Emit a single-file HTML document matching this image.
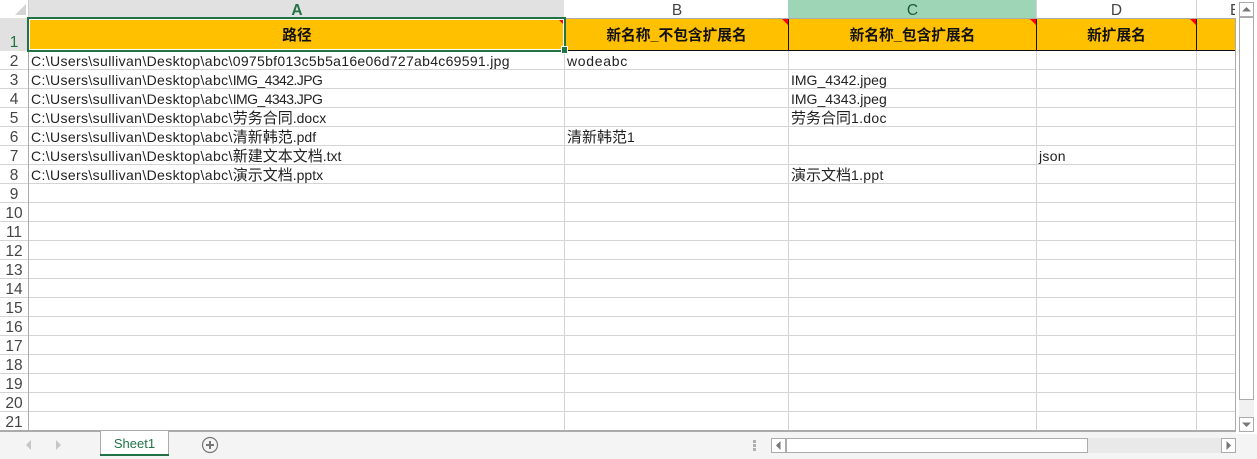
<!DOCTYPE html>
<html><head><meta charset="utf-8">
<style>
html,body{margin:0;padding:0;width:1257px;height:459px;overflow:hidden;background:#fff}
body{position:relative;font-family:"Liberation Sans","Noto Sans CJK SC",sans-serif;color:#222}
.a{position:absolute}
.hl{position:absolute;left:0;width:1235px;height:1px;background:#d4d4d4}
.vl{position:absolute;top:51px;height:379px;width:1px;background:#d4d4d4}
.rn{position:absolute;left:0;width:28px;text-align:center;font-size:15.500px;line-height:19px;color:#444}
.t{position:absolute;font-size:14px;line-height:19px;white-space:nowrap;color:#222}
.c{font-size:15px}
.p{letter-spacing:.37px}
.ch{position:absolute;top:0;height:18px;line-height:21px;text-align:center;font-size:15.500px;color:#444;overflow:hidden}
.h{position:absolute;top:18px;height:33px;line-height:36px;text-align:center;font-size:14.700px;font-weight:bold;color:#111}
.tri{position:absolute;top:19px;width:0;height:0;border-top:6px solid #f00;border-left:6px solid transparent}
</style></head><body>
<!-- column header band -->
<svg class="a" style="left:0;top:0" width="28" height="18"><polygon points="26,4 26,15 15,15" fill="#d4d4d4"/></svg>
<div class="a" style="left:28px;top:0;width:536px;height:18px;background:#e1e1e1"></div>
<div class="a" style="left:28px;top:0;width:1px;height:18px;background:#ccc"></div>
<div class="a" style="left:788px;top:0;width:248px;height:18px;background:#9fd5b7"></div>
<div class="a" style="left:1036px;top:0;width:1px;height:18px;background:#d4d4d4"></div>
<div class="a" style="left:1196px;top:0;width:1px;height:18px;background:#d4d4d4"></div>
<div class="a" style="left:0;top:18px;width:1235px;height:1px;background:#ababab"></div>
<div class="ch" style="left:28px;width:538px;color:#217346;font-weight:bold">A</div>
<div class="ch" style="left:565px;width:224px">B</div>
<div class="ch" style="left:788px;width:249px;color:#185c37">C</div>
<div class="ch" style="left:1037px;width:159px">D</div>
<div class="ch" style="left:1230px;width:5px;text-align:left">E</div>
<!-- row header band -->
<div class="a" style="left:0;top:18px;width:28px;height:33px;background:#e1e1e1"></div>
<!-- grid -->
<div class="hl" style="top:69px"></div><div class="hl" style="top:88px"></div><div class="hl" style="top:107px"></div><div class="hl" style="top:126px"></div><div class="hl" style="top:145px"></div><div class="hl" style="top:164px"></div><div class="hl" style="top:183px"></div><div class="hl" style="top:202px"></div><div class="hl" style="top:221px"></div><div class="hl" style="top:240px"></div><div class="hl" style="top:259px"></div><div class="hl" style="top:278px"></div><div class="hl" style="top:297px"></div><div class="hl" style="top:316px"></div><div class="hl" style="top:335px"></div><div class="hl" style="top:354px"></div><div class="hl" style="top:373px"></div><div class="hl" style="top:392px"></div><div class="hl" style="top:411px"></div>
<div class="vl" style="left:564px"></div><div class="vl" style="left:788px"></div><div class="vl" style="left:1036px"></div><div class="vl" style="left:1196px"></div>
<div class="a" style="left:28px;top:18px;width:1px;height:413px;background:#ababab"></div>
<!-- orange header row -->
<div class="a" style="left:29px;top:19px;width:1206px;height:31px;background:#ffc000"></div>
<div class="a" style="left:29px;top:50px;width:1206px;height:1px;background:#111"></div>
<div class="a" style="left:788px;top:19px;width:1px;height:32px;background:#111"></div>
<div class="a" style="left:1036px;top:19px;width:1px;height:32px;background:#111"></div>
<div class="a" style="left:1196px;top:19px;width:1px;height:32px;background:#111"></div>
<div class="h" style="left:29px;width:536px">路径</div>
<div class="h" style="left:565px;width:223px">新名称_不包含扩展名</div>
<div class="h" style="left:789px;width:247px">新名称_包含扩展名</div>
<div class="h" style="left:1037px;width:159px">新扩展名</div>
<div class="tri" style="left:782px"></div><div class="tri" style="left:1030px"></div><div class="tri" style="left:1190px"></div>
<!-- selection -->
<div class="a" style="left:27px;top:17px;width:539px;height:35px;border:2px solid #217346;box-sizing:border-box"></div>
<div class="a" style="left:29px;top:19px;width:535px;height:31px;border:1px solid #fff;box-sizing:border-box"></div>
<div class="tri" style="left:559px;top:20px;border-top-width:4px;border-left-width:4px"></div>
<div class="a" style="left:561px;top:46px;width:7px;height:8px;background:#217346;border:1px solid #fff;box-sizing:border-box"></div>
<!-- row numbers -->
<div class="rn" style="top:33px;color:#217346">1</div>
<div class="rn" style="top:52px">2</div><div class="rn" style="top:71px">3</div><div class="rn" style="top:90px">4</div><div class="rn" style="top:109px">5</div><div class="rn" style="top:128px">6</div><div class="rn" style="top:147px">7</div><div class="rn" style="top:166px">8</div><div class="rn" style="top:185px">9</div><div class="rn" style="top:204px">10</div><div class="rn" style="top:223px">11</div><div class="rn" style="top:242px">12</div><div class="rn" style="top:261px">13</div><div class="rn" style="top:280px">14</div><div class="rn" style="top:299px">15</div><div class="rn" style="top:318px">16</div><div class="rn" style="top:337px">17</div><div class="rn" style="top:356px">18</div><div class="rn" style="top:375px">19</div><div class="rn" style="top:394px">20</div><div class="rn" style="top:413px">21</div>
<!-- cells -->
<div class="t" style="left:31px;top:52px"><span class="p">C:\Users\sullivan\Desktop\abc\</span><span style="letter-spacing:.3px">0975bf013c5b5a16e06d727ab4c69591.jpg</span></div>
<div class="t" style="left:31px;top:71px"><span class="p">C:\Users\sullivan\Desktop\abc\</span><span style="letter-spacing:-.58px">IMG_4342.JPG</span></div>
<div class="t" style="left:31px;top:90px"><span class="p">C:\Users\sullivan\Desktop\abc\</span><span style="letter-spacing:-.58px">IMG_4343.JPG</span></div>
<div class="t" style="left:31px;top:109px"><span class="p">C:\Users\sullivan\Desktop\abc\</span><span class="c">劳务合同</span>.docx</div>
<div class="t" style="left:31px;top:128px"><span class="p">C:\Users\sullivan\Desktop\abc\</span><span class="c">清新韩范</span>.pdf</div>
<div class="t" style="left:31px;top:147px"><span class="p">C:\Users\sullivan\Desktop\abc\</span><span class="c">新建文本文档</span>.txt</div>
<div class="t" style="left:31px;top:166px"><span class="p">C:\Users\sullivan\Desktop\abc\</span><span class="c">演示文档</span>.pptx</div>
<div class="t" style="left:567px;top:52px;letter-spacing:.7px">wodeabc</div>
<div class="t" style="left:567px;top:128px"><span class="c">清新韩范</span>1</div>
<div class="t" style="left:791px;top:71px">IMG_4342.jpeg</div>
<div class="t" style="left:791px;top:90px">IMG_4343.jpeg</div>
<div class="t" style="left:791px;top:109px"><span class="c">劳务合同</span><span style="letter-spacing:.3px">1.doc</span></div>
<div class="t" style="left:791px;top:166px"><span class="c">演示文档</span><span style="letter-spacing:.3px">1.ppt</span></div>
<div class="t" style="left:1039px;top:147px;letter-spacing:.3px">json</div>
<!-- vertical scrollbar -->
<div class="a" style="left:1236px;top:0;width:21px;height:431px;background:#fff"></div>
<div class="a" style="left:1235px;top:18px;width:1px;height:413px;background:#ababab"></div>
<div class="a" style="left:1239px;top:2px;width:15px;height:15px;border:1px solid #ababab;box-sizing:border-box;background:#fff"></div>
<svg class="a" style="left:1239px;top:2px" width="15" height="15"><polygon points="3,9.500 12,9.500 7.500,5" fill="#777"/></svg>
<div class="a" style="left:1239px;top:17px;width:15px;height:383px;border:1px solid #ababab;box-sizing:border-box;background:#fff"></div>
<div class="a" style="left:1239px;top:400px;width:15px;height:17px;background:#f1f1f1"></div>
<!-- bottom bar -->
<div class="a" style="left:0;top:431px;width:1257px;height:28px;background:#f4f4f4"></div>
<div class="a" style="left:0;top:430px;width:1236px;height:2px;background:#ababab"></div>
<div class="a" style="left:1236px;top:431px;width:21px;height:3px;background:#fff"></div>
<div class="a" style="left:1239px;top:417px;width:15px;height:15px;border:1px solid #ababab;box-sizing:border-box;background:#fff"></div>
<svg class="a" style="left:1239px;top:417px" width="15" height="15"><polygon points="3,5.500 12,5.500 7.500,10" fill="#777"/></svg>
<svg class="a" style="left:25px;top:440px" width="40" height="10"><polygon points="6,0 6,10 1,5" fill="#c6c6c6"/><polygon points="31,0 31,10 36,5" fill="#c6c6c6"/></svg>
<div class="a" style="left:100px;top:431px;width:69px;height:25px;background:#fff;border-left:1px solid #ababab;border-right:1px solid #ababab;box-sizing:border-box"></div>
<div class="a" style="left:100px;top:454px;width:69px;height:2px;background:#217346"></div>
<div class="a" style="left:100px;top:434px;width:69px;height:20px;line-height:20px;text-align:center;font-size:13px;color:#217346">Sheet1</div>
<svg class="a" style="left:201px;top:436px" width="18" height="18"><circle cx="9" cy="9" r="7.500" fill="none" stroke="#777" stroke-width="1.200"/><path d="M9 5v8M5 9h8" stroke="#777" stroke-width="2" fill="none"/></svg>
<div class="a" style="left:753px;top:440px;width:3px;height:3px;background:#b0b0b0"></div>
<div class="a" style="left:753px;top:444px;width:3px;height:3px;background:#b0b0b0"></div>
<div class="a" style="left:753px;top:448px;width:3px;height:3px;background:#b0b0b0"></div>
<!-- horizontal scrollbar -->
<div class="a" style="left:771px;top:438px;width:465px;height:15px;background:#e9e9e9"></div>
<div class="a" style="left:771px;top:438px;width:15px;height:15px;border:1px solid #ababab;box-sizing:border-box;background:#fff"></div>
<svg class="a" style="left:771px;top:438px" width="15" height="15"><polygon points="9.500,3 9.500,12 5,7.500" fill="#777"/></svg>
<div class="a" style="left:786px;top:438px;width:302px;height:15px;border:1px solid #ababab;box-sizing:border-box;background:#fff"></div>
<div class="a" style="left:1221px;top:438px;width:15px;height:15px;border:1px solid #ababab;box-sizing:border-box;background:#fff"></div>
<svg class="a" style="left:1221px;top:438px" width="15" height="15"><polygon points="5.500,3 5.500,12 10,7.500" fill="#777"/></svg>
</body></html>
